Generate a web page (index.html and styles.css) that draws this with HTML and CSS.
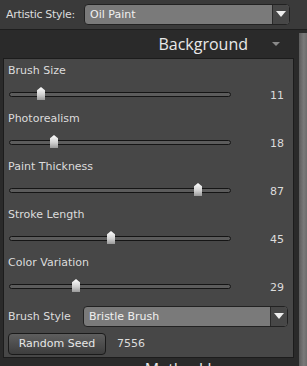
FILE: index.html
```html
<!DOCTYPE html>
<html lang="en">
<head>
  <meta charset="UTF-8">
  <title>Oil Paint</title>
  <link rel="stylesheet" href="styles.css">
</head>
<body>
  <div class="topbar">
    <span class="lbl">Artistic Style:</span>
    <div class="combo top-combo">
      <span class="combo-text">Oil Paint</span>
      <span class="combo-btn"><i class="tri"></i></span>
    </div>
  </div>

  <div class="main">
    <div class="content">
      <div class="header">
        <span class="header-title">Background</span>
        <i class="header-arrow"></i>
      </div>

      <div class="panel">
        <div class="label">Brush Size</div>
        <div class="slider-row">
          <div class="track"><span class="thumb" style="left: 27px"></span></div>
          <span class="value">11</span>
        </div>

        <div class="label">Photorealism</div>
        <div class="slider-row">
          <div class="track"><span class="thumb" style="left: 40px"></span></div>
          <span class="value">18</span>
        </div>

        <div class="label">Paint Thickness</div>
        <div class="slider-row">
          <div class="track"><span class="thumb" style="left: 184px"></span></div>
          <span class="value">87</span>
        </div>

        <div class="label">Stroke Length</div>
        <div class="slider-row">
          <div class="track"><span class="thumb" style="left: 97px"></span></div>
          <span class="value">45</span>
        </div>

        <div class="label">Color Variation</div>
        <div class="slider-row">
          <div class="track"><span class="thumb" style="left: 62px"></span></div>
          <span class="value">29</span>
        </div>

        <div class="style-row">
          <span class="lbl">Brush Style</span>
          <div class="combo brush-combo">
            <span class="combo-text">Bristle Brush</span>
            <span class="combo-btn"><i class="tri"></i></span>
          </div>
        </div>

        <div class="seed-row">
          <button class="btn">Random Seed</button>
          <span class="seed">7556</span>
        </div>
      </div>

      <div class="header header-next">
        <span class="header-title">Method Layer</span>
        <i class="header-arrow"></i>
      </div>
    </div>
    <div class="scrollbar"></div>
  </div>
</body>
</html>
```

FILE: styles.css
```css
body {
  margin: 0;
  width: 307px;
  height: 366px;
  overflow: hidden;
  background-color: #2a2a2a;
  color: #dcdcdc;
  font-family: "DejaVu Sans", "Liberation Sans", sans-serif;
  font-size: 11px;
}
.topbar {
  display: flex;
  align-items: center;
  height: 30px;
  padding: 0 0 1px 6px;
  background-color: #3a3a3a;
  border-bottom: 1px solid #1e1e1e;
  box-sizing: border-box;
}
.topbar .lbl {
  width: 78px;
  letter-spacing: -0.3px;
}
.combo {
  display: flex;
  height: 21px;
  background-color: #7a7a7a;
  border: 1px solid #222;
  border-radius: 4px;
  box-sizing: border-box;
  overflow: hidden;
}
.combo-text {
  flex: 1;
  padding-left: 5px;
  line-height: 19px;
  color: #f0f0f0;
}
.combo-btn {
  display: flex;
  align-items: center;
  justify-content: center;
  width: 16px;
  background-color: #474747;
  border-left: 1px solid #2a2a2a;
}
.tri {
  width: 0;
  height: 0;
  border-left: 5px solid transparent;
  border-right: 5px solid transparent;
  border-top: 6px solid #eee;
}
.top-combo {
  width: 206px;
}
.main {
  display: flex;
}
.content {
  width: 296px;
}
.scrollbar {
  width: 8px;
  margin-top: 3px;
  margin-left: 3px;
  background: linear-gradient(to right, #5c5c5c, #7a7a7a 60%, #6c6c6c);
}
.header {
  display: flex;
  align-items: center;
  justify-content: flex-end;
  height: 28px;
  padding-right: 16px;
}
.header-next {
  align-items: flex-start;
  height: 22px;
}
.header-next .header-arrow {
  margin-top: 9px;
}
.header-title {
  font-family: "Open Sans", "DejaVu Sans", sans-serif;
  font-size: 16px;
  line-height: 22px;
  color: #e8e8e8;
  margin-right: 24px;
}
.header-arrow {
  width: 0;
  height: 0;
  border-left: 4px solid transparent;
  border-right: 4px solid transparent;
  border-top: 4px solid #8a8a8a;
}
.panel {
  margin-left: 3px;
  width: 291px;
  box-sizing: border-box;
  padding: 2px 9px 1px 4px;
  background-color: #474747;
  border: 1px solid #1c1c1c;
}
.label {
  height: 20px;
  line-height: 20px;
}
.slider-row {
  display: flex;
  align-items: center;
  height: 28px;
}
.track {
  position: relative;
  width: 220px;
  height: 3px;
  margin-left: 1px;
  margin-top: -1px;
  background-color: #5c5c5c;
  border: 1px solid #151515;
  border-radius: 3px;
}
.thumb {
  position: absolute;
  top: -6px;
  width: 8px;
  height: 13px;
  background: linear-gradient(to bottom, #ffffff, #cfcfcf 60%, #9a9a9a);
  clip-path: polygon(50% 0, 100% 25%, 100% 100%, 0 100%, 0 25%);
}
.value {
  margin-left: auto;
}
.style-row {
  display: flex;
  align-items: center;
  height: 30px;
}
.style-row .lbl {
  width: 75px;
}
.brush-combo {
  width: 205px;
  margin-right: -5px;
}
.seed-row {
  display: flex;
  align-items: center;
  height: 25px;
}
.btn {
  width: 98px;
  height: 22px;
  padding: 0;
  font-family: inherit;
  font-size: 11px;
  color: #e6e6e6;
  background: linear-gradient(to bottom, #5e5e5e, #3d3d3d);
  border: 1px solid #1a1a1a;
  border-radius: 4px;
}
.seed {
  margin-left: 11px;
}
```
